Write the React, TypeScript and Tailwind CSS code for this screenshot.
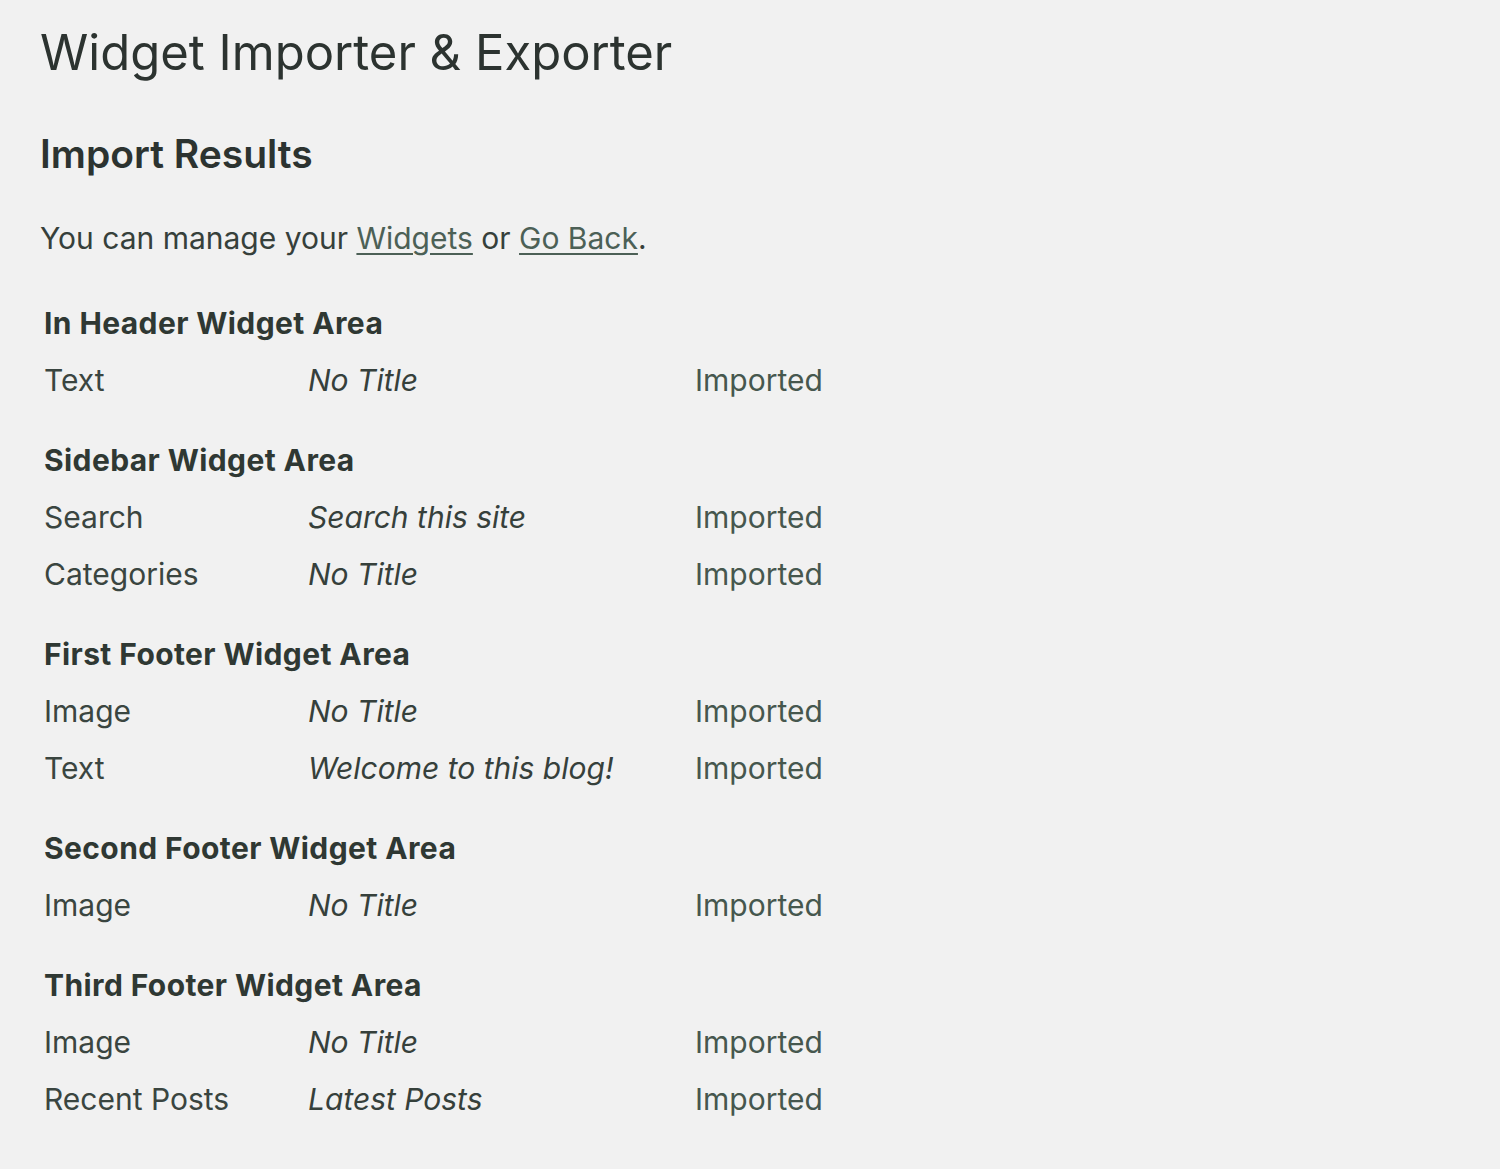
const font = { fontFamily: '"Inter", "Noto Sans", sans-serif' };

type Row = { type: string; title: string; result: string };
type Area = { name: string; rows: Row[] };

const areas: Area[] = [
  { name: "In Header Widget Area", rows: [{ type: "Text", title: "No Title", result: "Imported" }] },
  {
    name: "Sidebar Widget Area",
    rows: [
      { type: "Search", title: "Search this site", result: "Imported" },
      { type: "Categories", title: "No Title", result: "Imported" },
    ],
  },
  {
    name: "First Footer Widget Area",
    rows: [
      { type: "Image", title: "No Title", result: "Imported" },
      { type: "Text", title: "Welcome to this blog!", result: "Imported" },
    ],
  },
  { name: "Second Footer Widget Area", rows: [{ type: "Image", title: "No Title", result: "Imported" }] },
  {
    name: "Third Footer Widget Area",
    rows: [
      { type: "Image", title: "No Title", result: "Imported" },
      { type: "Recent Posts", title: "Latest Posts", result: "Imported" },
    ],
  },
];

export default function App() {
  return (
    <div className="min-h-[1169px] w-full bg-[#f1f1f1] text-[#323a36]" style={font}>
      <div className="pl-10 pt-[19px]">
        <h1 className="text-[49px] leading-[68px] font-normal text-[#2c3330]">
          Widget Importer &amp; Exporter
        </h1>
        <h2 className="mt-[43px] text-[39px] leading-[48px] font-semibold text-[#2c3330]">
          Import Results
        </h2>
        <p className="mt-[38px] text-[30px] leading-[44px] text-[#36403b]">
          You can manage your{" "}
          <a className="underline underline-offset-4 decoration-2 text-[#4c6056]" href="#">
            Widgets
          </a>{" "}
          or{" "}
          <a className="underline underline-offset-4 decoration-2 text-[#4c6056]" href="#">
            Go Back
          </a>
          .
        </p>

        <div className="mt-[35px] pl-1 flex flex-col gap-[23px]">
          {areas.map((area) => (
            <div key={area.name}>
              <div className="text-[30px] leading-[57px] font-bold tracking-[0.4px] text-[#2f3833]">{area.name}</div>
              {area.rows.map((row, i) => (
                <div key={i} className="grid grid-cols-[264px_387px_200px] text-[30px] leading-[57px]">
                  <span className="text-[#3a4540]">{row.type}</span>
                  <span className="italic text-[#36403b]">{row.title}</span>
                  <span className="text-[#46574e]">{row.result}</span>
                </div>
              ))}
            </div>
          ))}
        </div>
      </div>
    </div>
  );
}
